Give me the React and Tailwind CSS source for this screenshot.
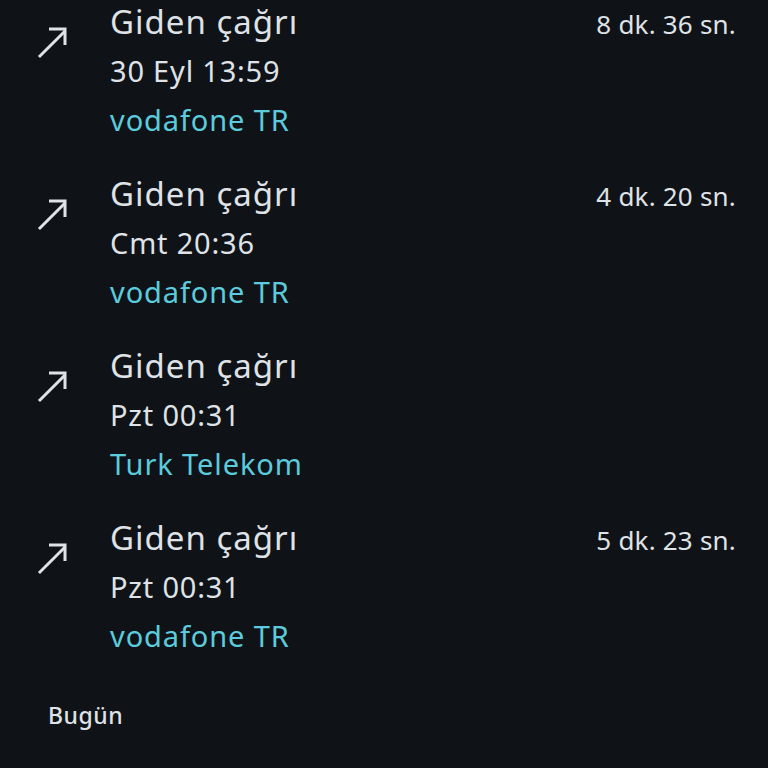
import React from "react";

const CALLS = [
  { time: "30 Eyl 13:59", carrier: "vodafone TR", duration: "8 dk. 36 sn." },
  { time: "Cmt 20:36", carrier: "vodafone TR", duration: "4 dk. 20 sn." },
  { time: "Pzt 00:31", carrier: "Turk Telekom", duration: "" },
  { time: "Pzt 00:31", carrier: "vodafone TR", duration: "5 dk. 23 sn." },
];

function OutgoingArrow() {
  return (
    <svg width="40" height="40" viewBox="0 0 40 40" fill="none" stroke="#dfe2e6" strokeWidth="3" strokeLinecap="square">
      <path d="M8 33 L32 9" />
      <path d="M17 6 H33 V22" strokeLinecap="butt" />
    </svg>
  );
}

export default function App() {
  return (
    <div className="w-[768px] h-[768px] overflow-hidden bg-[#0f1317] text-[#dfe2e6]" style={{ fontFamily: "'Noto Sans', 'Open Sans', sans-serif" }}>
      {CALLS.map((c, i) => (
        <div key={i} className="h-[172px] flex">
          {/* icon */}
          <div className="w-[110px] pl-8 pt-[23px] shrink-0">
            <OutgoingArrow />
          </div>
          <div className="flex-1">
            <div className="text-[33px] leading-[44px] tracking-[1px]">Giden çağrı</div>
            <div className="text-[29px] leading-[44px] mt-[5px] tracking-[0.8px]">{c.time}</div>
            <div className="text-[29px] leading-[44px] mt-[5px] tracking-[0.9px] text-[#5ccbdd]">{c.carrier}</div>
          </div>
          <div className="pr-8 text-[26px] leading-[48px] tracking-[0.2px] text-[#dfe2e6]">{c.duration}</div>
        </div>
      ))}
      <div className="pl-12 pt-3 text-[23px] leading-[30px] tracking-[0.5px] font-medium text-[#dfe2e6]">Bugün</div>
    </div>
  );
}
